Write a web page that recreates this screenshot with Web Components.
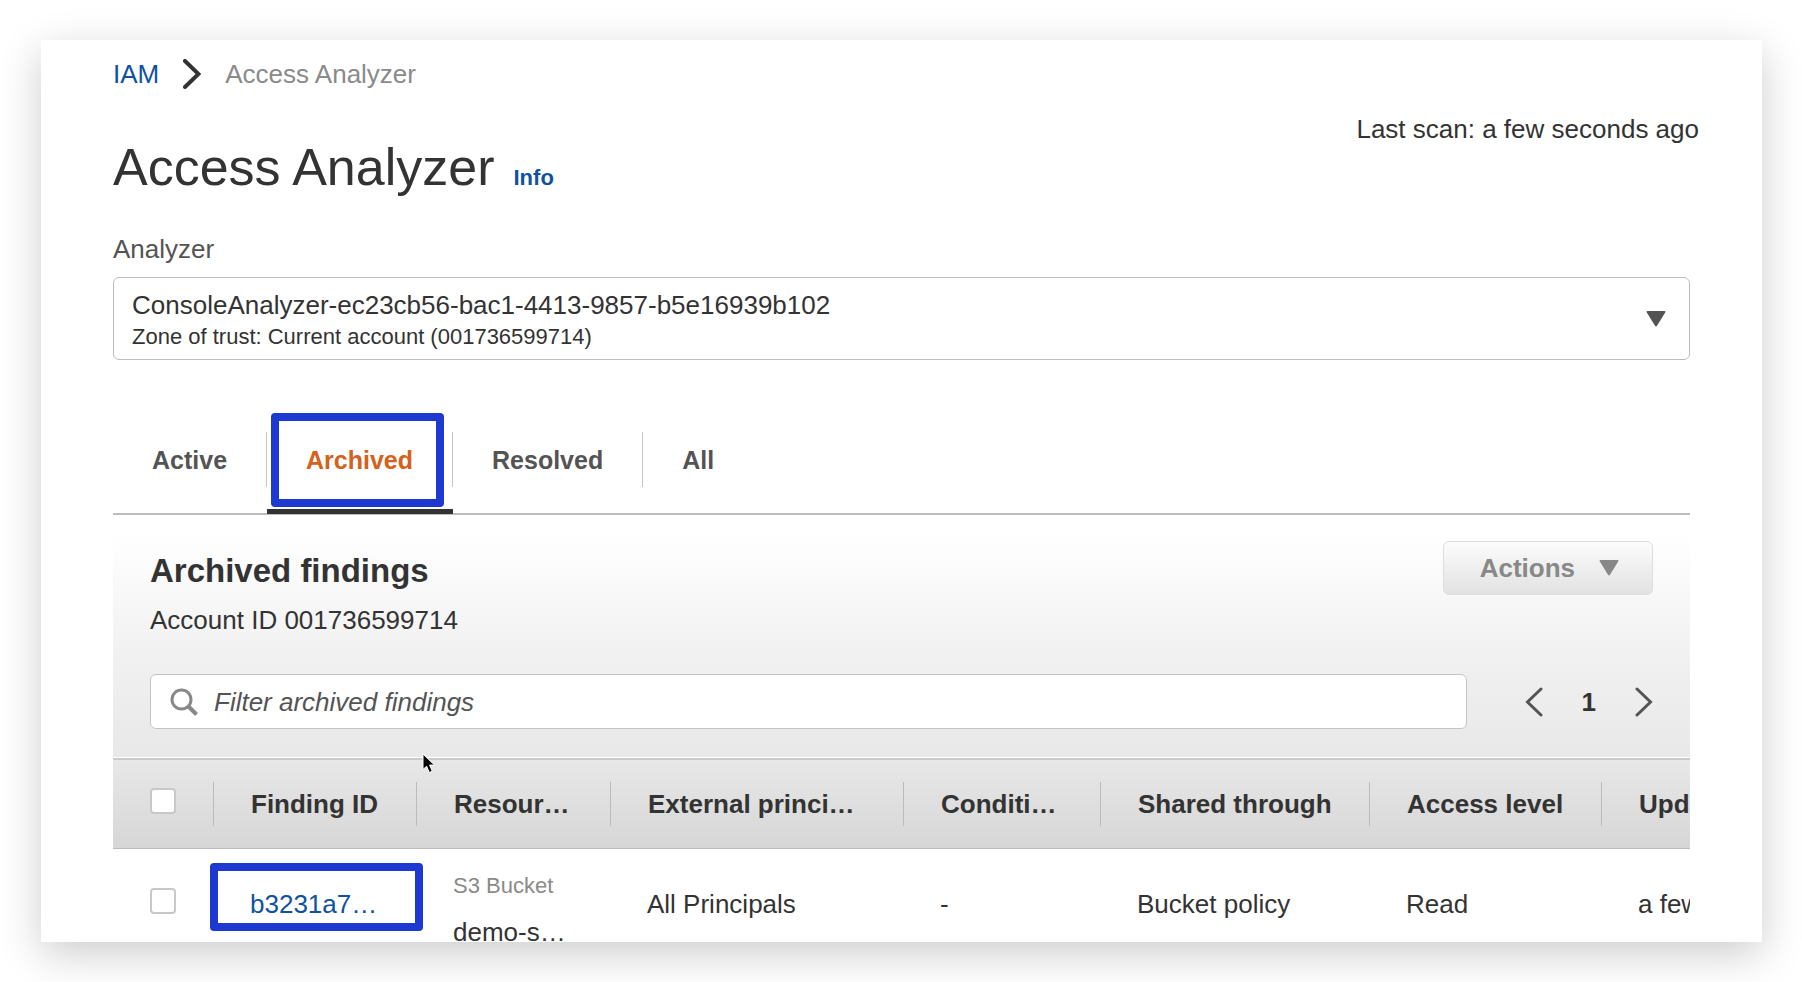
<!DOCTYPE html>
<html lang="en">
<head>
<meta charset="utf-8">
<title>Access Analyzer</title>
<style>
    body {
        margin: 0;
        background: #fff;
        color: #333;
        font: 26px/32px "Liberation Sans", Arial, sans-serif;
        overflow: hidden;
    }
</style>
</head>
<body>

<window-card>
    <bread-crumbs parent="IAM" current="Access Analyzer"></bread-crumbs>
    <page-header status="Last scan: a few seconds ago">Access Analyzer</page-header>
    <analyzer-select label="Analyzer" note="Zone of trust: Current account (001736599714)">
        <option>ConsoleAnalyzer-ec23cb56-bac1-4413-9857-b5e16939b102</option>
    </analyzer-select>
    <finding-tabs tabs="Active,Archived,Resolved,All" active="Archived"></finding-tabs>
    <findings-panel>
        <span slot="title">Archived findings</span>
        <span slot="account">Account ID 001736599714</span>
    </findings-panel>
    <findings-table></findings-table>
</window-card>

<script>
class BaseElement extends HTMLElement {

    connectedCallback() {
        if (this.shadowRoot) return;
        const template = document.createElement("template");
        template.innerHTML = this.render();
        this.attachShadow({ mode: "open" }).append(template.content.cloneNode(true));
        this.ready();
    }

    render() { return ""; }

    ready() {}
}

const chevron = (direction, weight = 3) => `
    <svg width="18" height="30" viewBox="0 0 18 30" fill="none" stroke="currentColor" stroke-width="${weight}" stroke-linecap="round" aria-hidden="true">
        <path d="${direction === "left" ? "M16 2 2.500 15 16 28" : "M2 2 15.500 15 2 28"}"/>
    </svg>
`;

const caret = `
    <svg width="20" height="16" viewBox="0 0 20 16" fill="currentColor" aria-hidden="true">
        <path d="M1.500 0h17q1.500 0 .7 1.400L11 14.800q-1 1.400-2 0L.8 1.400Q0 0 1.500 0Z"/>
    </svg>
`;

const checkboxStyle = `
    input[type="checkbox"] {
        appearance: none;
        display: block;
        box-sizing: border-box;
        width: 26px;
        height: 26px;
        margin: 0;
        background: #fff;
        border: 2px solid #c8c8c8;
        border-radius: 4px;
    }
    input[type="checkbox"]:checked {
        background: #0f52a0;
    }
`;

class WindowCard extends BaseElement {
    render() {
        return `
            <style>
                :host {
                    display: block;
                    position: relative;
                    box-sizing: border-box;
                    height: calc(100vh - 80px);
                    margin: 40px 40px 40px 41px;
                    padding: 18px 72px 0;
                    overflow: hidden;
                    background: #fff;
                    box-shadow: 0 12px 40px rgba(0, 0, 0, 0.2);
                }
                .pointer {
                    position: absolute;
                    left: 381px;
                    top: 713px;
                }
            </style>
            <slot></slot>
            <svg class="pointer" width="16" height="22" viewBox="0 0 16 22" aria-hidden="true">
                <path d="M1 1v15.500l3.600-3.300 2.700 6.300 3-1.300-2.700-6.100h4.900Z" fill="#000" stroke="#fff" stroke-width="1"/>
            </svg>
        `;
    }
}

class BreadCrumbs extends BaseElement {
    render() {
        return `
            <style>
                :host { display: block; }
                nav {
                    display: flex;
                    align-items: center;
                    gap: 24px;
                }
                a {
                    color: #0f52a0;
                    text-decoration: none;
                }
                svg { display: block; }
                .current { color: #8a8a8a; }
            </style>
            <nav aria-label="Breadcrumbs">
                <a href="#">${this.getAttribute("parent")}</a>
                ${chevron("right", 4)}
                <span class="current" aria-current="page">${this.getAttribute("current")}</span>
            </nav>
        `;
    }
}

class PageHeader extends BaseElement {
    render() {
        return `
            <style>
                :host {
                    display: flex;
                    justify-content: space-between;
                    align-items: flex-start;
                    margin-right: -9px;
                }
                .title {
                    display: flex;
                    align-items: baseline;
                    gap: 19px;
                    margin-top: 47px;
                }
                h1 {
                    margin: 0;
                    font-size: 52px;
                    line-height: 60px;
                    font-weight: 400;
                }
                a {
                    color: #0f52a0;
                    font-size: 22px;
                    line-height: 28px;
                    font-weight: 700;
                    text-decoration: none;
                }
                .status { margin-top: 23px; }
            </style>
            <div class="title">
                <h1><slot></slot></h1>
                <a href="#">Info</a>
            </div>
            <div class="status">${this.getAttribute("status")}</div>
        `;
    }
}

class AnalyzerSelect extends BaseElement {
    render() {
        return `
            <style>
                :host {
                    display: block;
                    margin-top: 36px;
                }
                label {
                    display: block;
                    color: #545454;
                }
                .field {
                    display: grid;
                    grid-template-columns: 1fr auto;
                    margin-top: 12px;
                }
                select {
                    grid-area: 1 / 1 / 2 / 3;
                    appearance: none;
                    box-sizing: border-box;
                    width: 100%;
                    margin: 0;
                    padding: 11px 60px 38px 18px;
                    background: #fff;
                    border: 1px solid #bdbdbd;
                    border-radius: 6px;
                    color: inherit;
                    font: inherit;
                }
                .note {
                    grid-area: 1 / 1 / 2 / 2;
                    align-self: end;
                    padding: 0 0 9px 19px;
                    font-size: 22px;
                    line-height: 28px;
                    pointer-events: none;
                }
                svg {
                    grid-area: 1 / 2 / 2 / 3;
                    align-self: center;
                    margin-right: 24px;
                    color: #545454;
                    pointer-events: none;
                }
            </style>
            <label for="analyzer">${this.getAttribute("label")}</label>
            <div class="field">
                <select id="analyzer" aria-describedby="note"></select>
                <span class="note" id="note">${this.getAttribute("note")}</span>
                ${caret}
            </div>
        `;
    }

    // a select takes no slotted options, so move them inside
    ready() {
        const select = this.shadowRoot.querySelector("select");
        select.append(...this.querySelectorAll("option"));
    }
}

class FindingTabs extends BaseElement {
    render() {
        const active = this.getAttribute("active");
        const tabs = this.getAttribute("tabs").split(",").map(name => `
            <button role="tab" aria-selected="${name === active}"><span>${name}</span></button>
        `);
        return `
            <style>
                :host {
                    display: block;
                    margin-top: 72px;
                }
                .tabs {
                    display: flex;
                    border-bottom: 2px solid #bdbdbd;
                }
                button {
                    position: relative;
                    margin: 0 0 -1px;
                    padding: 0 0 22px;
                    background: none;
                    border: 0;
                    border-bottom: 5px solid transparent;
                    color: #545454;
                    font: inherit;
                    font-size: 25px;
                    font-weight: 700;
                    cursor: pointer;
                }
                span {
                    display: flex;
                    align-items: center;
                    height: 55px;
                    padding: 0 39px;
                    border-right: 1px solid #c4c4c4;
                }
                button:last-child span { border-right: 0; }
                button[aria-selected="true"] {
                    color: #d5611a;
                    border-bottom-color: #333;
                }
                button[aria-selected="true"]::after {
                    content: "";
                    position: absolute;
                    inset: -19px 9px 2px 4px;
                    border: 8px solid #1d39d1;
                    border-radius: 4px;
                }
            </style>
            <div class="tabs" role="tablist">${tabs.join("")}</div>
        `;
    }

    ready() {
        const buttons = this.shadowRoot.querySelectorAll("button");
        buttons.forEach(button => button.addEventListener("click", () => {
            buttons.forEach(other => other.setAttribute("aria-selected", other === button));
        }));
    }
}

class FindingsPanel extends BaseElement {
    render() {
        return `
            <style>
                :host {
                    display: block;
                    padding: 26px 37px 28px;
                    background: linear-gradient(#fff 8%, #f1f1f1 58%, #e8e8e8);
                    border-bottom: 1px solid #fff;
                }
                .head, .tools, .pages {
                    display: flex;
                    justify-content: space-between;
                }
                .head { align-items: flex-start; }
                h2 {
                    margin: 10px 0 13px;
                    font-size: 33px;
                    line-height: 40px;
                }
                p { margin: 0; }
                button {
                    padding: 0;
                    background: none;
                    border: 0;
                    color: #545454;
                    font: inherit;
                }
                .actions {
                    display: flex;
                    align-items: center;
                    gap: 24px;
                    height: 54px;
                    padding: 0 33px 0 36px;
                    background: linear-gradient(#fcfcfc, #e2e2e2);
                    border: 1px solid #dedede;
                    border-radius: 6px;
                    color: #888;
                    font-weight: 700;
                }
                .tools {
                    align-items: center;
                    gap: 58px;
                    margin-top: 38px;
                }
                label {
                    flex: 1;
                    display: flex;
                    align-items: center;
                    gap: 16px;
                    box-sizing: border-box;
                    height: 55px;
                    padding: 0 19px;
                    background: #fff;
                    border: 1px solid #c4c4c4;
                    border-radius: 6px;
                    color: #888;
                }
                input {
                    flex: 1;
                    min-width: 0;
                    height: 32px;
                    padding: 0;
                    background: none;
                    border: 0;
                    outline: none;
                    color: #333;
                    font: inherit;
                }
                input::placeholder {
                    color: #545454;
                    font-style: italic;
                    opacity: 1;
                }
                .pages {
                    align-items: center;
                    gap: 39px;
                    font-weight: 700;
                }
                svg { display: block; }
            </style>
            <div class="head">
                <div>
                    <h2><slot name="title"></slot></h2>
                    <p><slot name="account"></slot></p>
                </div>
                <button class="actions" aria-haspopup="menu" disabled>Actions ${caret}</button>
            </div>
            <div class="tools">
                <label>
                    <svg width="28" height="28" viewBox="0 0 28 28" fill="none" stroke="currentColor" stroke-width="3" aria-hidden="true">
                        <circle cx="11.500" cy="11.500" r="9.500"/>
                        <path d="M18.500 18.500 26.500 26.500" stroke-width="4"/>
                    </svg>
                    <input type="text" placeholder="Filter archived findings" aria-label="Filter archived findings">
                </label>
                <div class="pages">
                    <button aria-label="Previous page">${chevron("left")}</button>
                    <span>1</span>
                    <button aria-label="Next page">${chevron("right")}</button>
                </div>
            </div>
        `;
    }
}

class FindingsTable extends BaseElement {
    render() {
        const columns = ["Finding ID", "Resour…", "External princi…", "Conditi…", "Shared through", "Access level", "Updated"];
        return `
            <style>
                :host {
                    display: block;
                    overflow: hidden;
                }
                table {
                    table-layout: fixed;
                    width: 1788px;
                    border-collapse: separate;
                    border-spacing: 0;
                }
                th, td {
                    padding: 0;
                    text-align: left;
                    white-space: nowrap;
                }
                thead tr {
                    background: linear-gradient(#e8e8e8, #d6d6d6);
                }
                th {
                    height: 88px;
                    border-top: 2px solid #cacaca;
                    border-bottom: 1px solid #bbb;
                    font-size: 26px;
                }
                th span {
                    display: flex;
                    align-items: center;
                    height: 44px;
                    padding-left: 37px;
                    border-left: 1px solid #bbb;
                }
                td {
                    position: relative;
                    padding: 39px 0 0 37px;
                    vertical-align: top;
                }
                th.check {
                    box-sizing: border-box;
                    height: 91px;
                    padding: 28px 0 0 37px;
                    vertical-align: top;
                }
                .resource { padding-top: 23px; }
                .resource small {
                    display: block;
                    margin-bottom: 16px;
                    color: #8a8a8a;
                    font-size: 22px;
                    line-height: 28px;
                }
                a {
                    color: #0f52a0;
                    text-decoration: none;
                }
                .marked::after {
                    content: "";
                    position: absolute;
                    box-sizing: border-box;
                    top: 14px;
                    left: -3px;
                    right: -7px;
                    height: 68px;
                    border: 8px solid #1d39d1;
                    border-radius: 4px;
                    pointer-events: none;
                }
                ${checkboxStyle}
            </style>
            <table>
                <colgroup>
                    <col style="width: 100px">
                    <col style="width: 203px">
                    <col style="width: 194px">
                    <col style="width: 293px">
                    <col style="width: 197px">
                    <col style="width: 269px">
                    <col style="width: 232px">
                    <col>
                </colgroup>
                <thead>
                    <tr>
                        <th class="check"><input type="checkbox" aria-label="Select all findings"></th>
                        ${columns.map(name => `<th><span>${name}</span></th>`).join("")}
                    </tr>
                </thead>
                <tbody>
                    <tr>
                        <td><input type="checkbox" aria-label="Select finding b3231a7"></td>
                        <td class="marked"><a href="#">b3231a7…</a></td>
                        <td class="resource"><small>S3 Bucket</small>demo-s…</td>
                        <td>All Principals</td>
                        <td>-</td>
                        <td>Bucket policy</td>
                        <td>Read</td>
                        <td>a few seconds ago</td>
                    </tr>
                </tbody>
            </table>
        `;
    }
}

customElements.define("window-card", WindowCard);
customElements.define("bread-crumbs", BreadCrumbs);
customElements.define("page-header", PageHeader);
customElements.define("analyzer-select", AnalyzerSelect);
customElements.define("finding-tabs", FindingTabs);
customElements.define("findings-panel", FindingsPanel);
customElements.define("findings-table", FindingsTable);
</script>
</body>
</html>
